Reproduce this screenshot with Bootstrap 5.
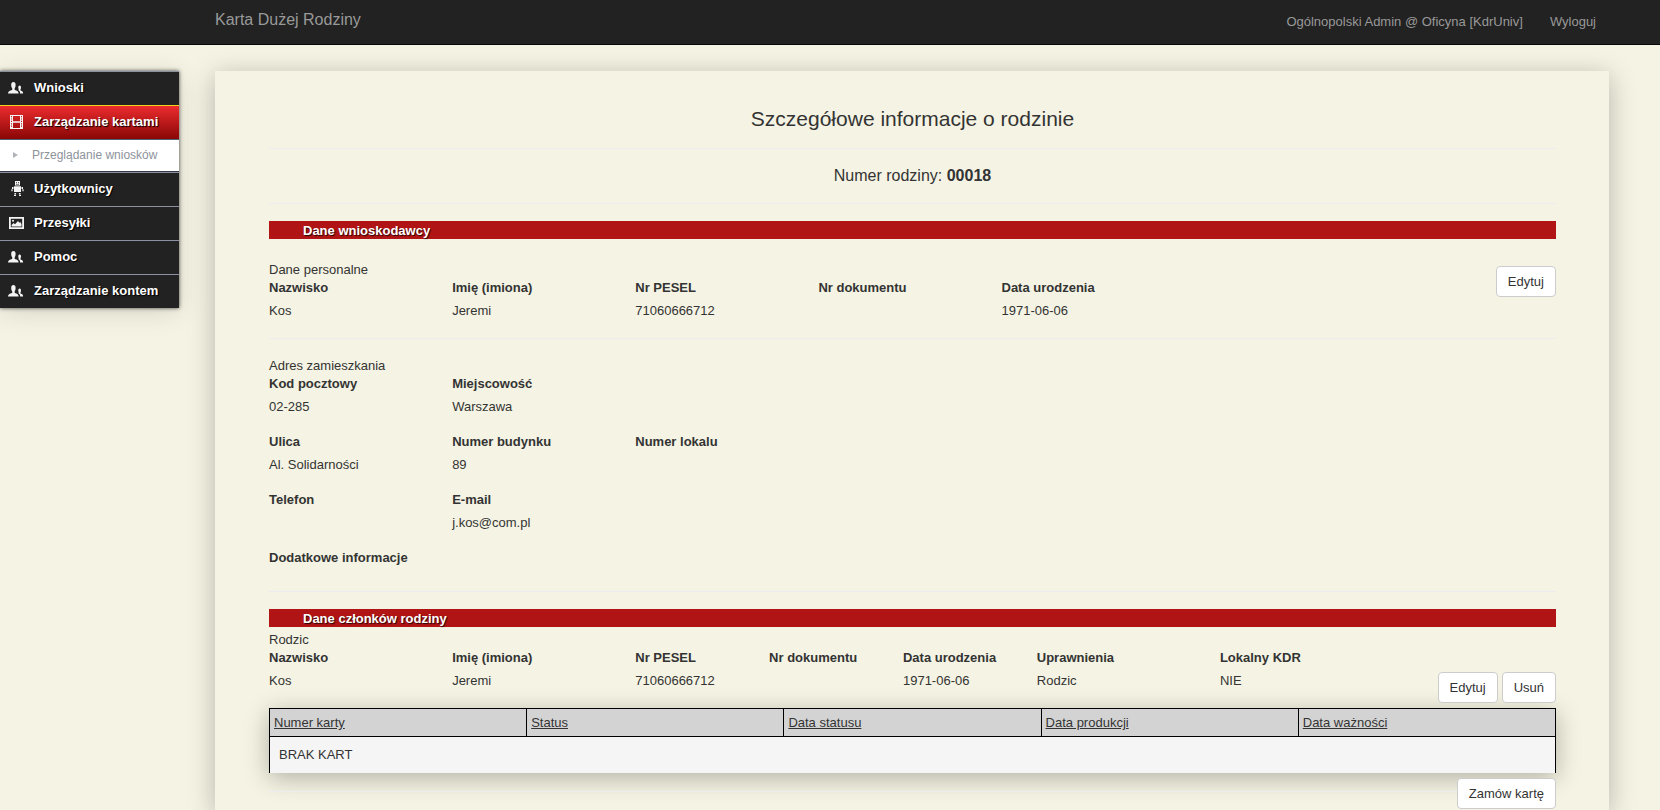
<!DOCTYPE html>
<html lang="pl">
<head>
<meta charset="utf-8">
<meta name="viewport" content="width=device-width, initial-scale=1">
<title>Karta Dużej Rodziny</title>
<link href="https://cdn.jsdelivr.net/npm/bootstrap@5.3.0/dist/css/bootstrap.min.css" rel="stylesheet">
<style>
body { background: #f5f3e3; color: #333; font: 13px/18px "Liberation Sans", Arial, sans-serif; }
.topbar { background: #222; border-bottom: 1px solid #080808; padding: 0 64px 0 215px; min-height: 45px; }
.topbar a { color: #999; text-decoration: none; }
.topbar .navbar-brand { font-size: 16px; line-height: 20px; padding: 0 0 4px; margin: 0; }
.topbar .nav-link { padding: 0; font-size: 13px; }
.top-links { gap: 27px; }
.page-body { padding: 26px 51px 0 0; gap: 36px; }
.side { width: 179px; box-shadow: 0 0 4px rgba(0,0,0,.7), 0 4px 25px rgba(0,0,0,.12); }
.side-link { height: 34px; background: #222; border-top: 1px solid #8b91a0; color: #fff; font-weight: 700; text-decoration: none; text-shadow: 1px 1px 1px #000; padding: 0 0 1px 8px; gap: 10px; }
.side-link svg { width: 16px; height: 16px; fill: #f4f4f4; flex: none; }
.side-link.active { background: linear-gradient(#ec2c2e, #8a0606); border-top-color: #f3d21c; }
.side-sub { height: 33px; background: #fff; border-top: 1px solid #4b6474; border-bottom: 1px solid #333844; color: #8d929b; font-size: 12px; text-decoration: none; padding: 0 0 2px 13px; gap: 14px; }
.side-sub svg { width: 5px; height: 6px; fill: #b0b3b9; }
.panel { min-width: 0; padding: 34px 53px 0 54px; background: #f5f3e3; box-shadow: 0 5px 25px rgba(0,0,0,.26); }
hr { margin: 0; border-top: 1px solid #ededef; opacity: 1; }
h1 { font-size: 21px; line-height: 28px; margin: 0; padding-bottom: 15px; }
h2 { font-size: 16px; line-height: 20px; margin: 0; padding: 17px 0; }
.section-bar { background: #b11414; color: #fff; font-size: 13px; line-height: 17px; font-weight: 700; text-shadow: 1px 1px 1px rgba(0,0,0,.8); padding: 1px 0 0 34px; margin: 17px 0 0; }
.person { padding: 22px 0 18px; }
.person .btn { margin-top: 5px; }
.address { padding: 18px 0 24px; }
.member { padding: 4px 0 5px; }
.data dl { flex: 0 0 14.23%; margin: 0; }
.data dl.narrow { flex-basis: 10.4%; }
.data dt, .data dd { margin: 0; min-height: 18px; }
.data dd { margin-top: 5px; }
.data + .data { margin-top: 17px; }
.person-title { height: 18px; }
.member-actions { padding-top: 23px; }
.btn-plain { --bs-btn-bg: #fff; --bs-btn-color: #333; --bs-btn-border-color: #ccc; --bs-btn-hover-bg: #ebebeb; --bs-btn-hover-color: #333; --bs-btn-hover-border-color: #adadad; font-size: 13px; line-height: 17px; padding: 6px 11px; border-radius: 4px; }
.cards-table { table-layout: fixed; border-collapse: collapse; box-shadow: 0 5px 25px rgba(0,0,0,.28); border: 1px solid #000; border-bottom: 0; }
.cards-table th { background: #d3d3d3; border: 1px solid #000; font-weight: 400; padding: 4px; line-height: 19px; }
.cards-table th a { color: #333; }
.cards-table td { background: #f5f5f5; padding: 9px; line-height: 18px; }
.order { padding-top: 5px; }
.order hr { margin-top: 13px; }
</style>
</head>
<body class="d-flex flex-column min-vh-100">
<nav class="topbar d-flex align-items-center justify-content-between">
  <a class="navbar-brand" href="#">Karta Dużej Rodziny</a>
  <div class="top-links d-flex ps-3">
    <a class="nav-link" href="#">Ogólnopolski Admin @ Oficyna [KdrUniv]</a>
    <a class="nav-link" href="#">Wyloguj</a>
  </div>
</nav>

<svg class="d-none">
  <symbol id="people" viewBox="0 0 16 16"><path d="M0 13.500c0-2.200 1.500-2.600 4.200-3.500V8.200C3.400 7.500 3.200 6 3.200 4.800 3.200 3 4 2 5.400 2s2.200 1 2.200 2.800c0 1.300-.2 2.700-.9 3.400V10c2.700.9 3.900 1.300 3.900 3.500z"/><path d="M10.600 8.800c-.6-.9-.5-3.300.9-3.300s1.500 1.100 1.500 1.900-.1 1.300-.5 1.800v1.300c1.900.6 2.600 1.100 2.600 3h-3c0-1.800-.5-2.500-1.500-3z"/></symbol>
  <symbol id="film" viewBox="0 0 16 16"><path fill-rule="evenodd" d="M2 1h13v14H2zM5 2v5.300h7V2zm0 6.700V14h7V8.700zM3 2v1.200h1V2zm0 2.400v1.200h1V4.400zm0 2.400V8h1V6.800zm0 2.400v1.200h1V9.200zm0 2.400v1.200h1v-1.200zM13 2v1.200h1V2zm0 2.400v1.200h1V4.400zm0 2.400V8h1V6.800zm0 2.400v1.200h1V9.200zm0 2.400v1.200h1v-1.200z"/></symbol>
  <symbol id="robot" viewBox="0 0 16 16"><path fill-rule="evenodd" d="M7 0h5v4.500H7zm1 1.200v1h1v-1zm2 0v1h1v-1zM8 3v.6h3V3z"/><path d="M6 5.200h7V11H6zM4 6h1.500v2H4zm9.500 0H15v2h-1.500zM3.400 8.300h1.200v2H3.400zm11 0h1.200v2h-1.200zM6.500 12h1.600v1.300H6.500zm4.400 0h1.600v1.300h-1.600zM6 13.700h2v1.300H6zm5 0h2v1.300h-2z"/></symbol>
  <symbol id="image" viewBox="0 0 16 16"><path fill-rule="evenodd" d="M1 2h15v12H1zm1.800 1.800v8.400h11.400V3.800z"/><path d="M3.600 11.400V10l2-2 1.400 1.300L10 6l1.300 1.800.9-.8 1.300 2v2.400z"/><circle cx="5" cy="5.700" r="1"/></symbol>
</svg>

<div class="page-body d-flex flex-grow-1">
  <aside class="side flex-shrink-0 align-self-start">
    <nav>
      <a class="side-link d-flex align-items-center" href="#"><svg><use href="#people"/></svg>Wnioski</a>
      <a class="side-link active d-flex align-items-center" href="#"><svg><use href="#film"/></svg>Zarządzanie kartami</a>
      <a class="side-sub d-flex align-items-center" href="#"><svg viewBox="0 0 5 6"><path d="M0 0l5 3-5 3z"/></svg>Przeglądanie wniosków</a>
      <a class="side-link d-flex align-items-center" href="#"><svg><use href="#robot"/></svg>Użytkownicy</a>
      <a class="side-link d-flex align-items-center" href="#"><svg><use href="#image"/></svg>Przesyłki</a>
      <a class="side-link d-flex align-items-center" href="#"><svg><use href="#people"/></svg>Pomoc</a>
      <a class="side-link d-flex align-items-center" href="#"><svg><use href="#people"/></svg>Zarządzanie kontem</a>
    </nav>
  </aside>

  <main class="panel flex-grow-1">
    <h1 class="text-center fw-normal">Szczegółowe informacje o rodzinie</h1>
    <hr>
    <h2 class="text-center fw-normal">Numer rodziny: <strong>00018</strong></h2>
    <hr>

    <h3 class="section-bar">Dane wnioskodawcy</h3>
    <section class="person">
      <div class="person-title d-flex justify-content-between align-items-start">
        <div>Dane personalne</div>
        <button type="button" class="btn btn-plain">Edytuj</button>
      </div>
      <div class="data d-flex">
        <dl><dt>Nazwisko</dt><dd>Kos</dd></dl>
        <dl><dt>Imię (imiona)</dt><dd>Jeremi</dd></dl>
        <dl><dt>Nr PESEL</dt><dd>71060666712</dd></dl>
        <dl><dt>Nr dokumentu</dt><dd></dd></dl>
        <dl><dt>Data urodzenia</dt><dd>1971-06-06</dd></dl>
      </div>
    </section>
    <hr>
    <section class="address">
      <div>Adres zamieszkania</div>
      <div class="data d-flex">
        <dl><dt>Kod pocztowy</dt><dd>02-285</dd></dl>
        <dl><dt>Miejscowość</dt><dd>Warszawa</dd></dl>
      </div>
      <div class="data d-flex">
        <dl><dt>Ulica</dt><dd>Al. Solidarności</dd></dl>
        <dl><dt>Numer budynku</dt><dd>89</dd></dl>
        <dl><dt>Numer lokalu</dt><dd></dd></dl>
      </div>
      <div class="data d-flex">
        <dl><dt>Telefon</dt><dd></dd></dl>
        <dl><dt>E-mail</dt><dd>j.kos@com.pl</dd></dl>
      </div>
      <div class="data"><strong>Dodatkowe informacje</strong></div>
    </section>
    <hr>

    <h3 class="section-bar">Dane członków rodziny</h3>
    <section class="member">
      <div>Rodzic</div>
      <div class="data d-flex">
        <dl><dt>Nazwisko</dt><dd>Kos</dd></dl>
        <dl><dt>Imię (imiona)</dt><dd>Jeremi</dd></dl>
        <dl class="narrow"><dt>Nr PESEL</dt><dd>71060666712</dd></dl>
        <dl class="narrow"><dt>Nr dokumentu</dt><dd></dd></dl>
        <dl class="narrow"><dt>Data urodzenia</dt><dd>1971-06-06</dd></dl>
        <dl><dt>Uprawnienia</dt><dd>Rodzic</dd></dl>
        <dl><dt>Lokalny KDR</dt><dd>NIE</dd></dl>
        <div class="member-actions ms-auto d-flex gap-1"><button type="button" class="btn btn-plain">Edytuj</button><button type="button" class="btn btn-plain">Usuń</button></div>
      </div>
    </section>
    <table class="cards-table w-100">
      <thead><tr><th><a href="#">Numer karty</a></th><th><a href="#">Status</a></th><th><a href="#">Data statusu</a></th><th><a href="#">Data produkcji</a></th><th><a href="#">Data ważności</a></th></tr></thead>
      <tbody><tr><td colspan="5">BRAK KART</td></tr></tbody>
    </table>
    <div class="order d-flex align-items-start">
      <hr class="flex-grow-1">
      <button type="button" class="btn btn-plain">Zamów kartę</button>
    </div>
  </main>
</div>
<script src="https://cdn.jsdelivr.net/npm/bootstrap@5.3.0/dist/js/bootstrap.bundle.min.js"></script>
</body>
</html>
